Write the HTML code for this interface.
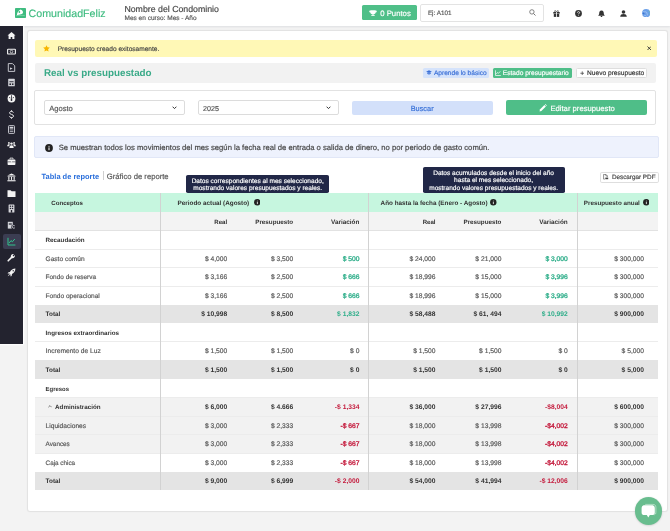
<!DOCTYPE html>
<html><head><meta charset="utf-8"><style>
html,body{margin:0;padding:0;}
body{width:670px;height:531px;position:relative;overflow:hidden;background:#f3f3f3;font-family:"Liberation Sans",sans-serif;text-rendering:geometricPrecision;}
.t{position:absolute;line-height:1;white-space:nowrap;}
.b{position:absolute;}
#w{position:absolute;left:0;top:0;width:670px;height:531px;will-change:transform;}
</style></head><body><div id="w">
<div class="b" style="left:0.00px;top:0.00px;width:670.00px;height:25.80px;background:#fff;box-shadow:0 0.5px 2px rgba(40,50,80,0.10);"></div>
<div class="b" style="left:14.90px;top:7.70px;width:10.70px;height:10.20px;background:#3fbc80;border-radius:0.8px;"></div>
<svg class="b" style="left:14.90px;top:7.70px;" width="10.9" height="10.2" viewBox="0 0 10.9 10.2"><path d="M5.5 1.4 C7.1 1.7 8.3 3.2 8.0 4.6 C7.8 5.6 7.0 6.1 6.0 6.3 C4.6 6.5 3.0 6.9 1.9 7.3 C1.9 5.0 2.8 3.0 5.5 1.4 Z" fill="#fff"/><ellipse cx="4.4" cy="4.0" rx="0.85" ry="1.05" fill="#3fbc80"/><path d="M1.2 7.7 C3.5 7.3 6.5 7.3 9.7 7.6" stroke="#fff" stroke-width="0.4" fill="none" opacity="0.7"/></svg>
<div class="t" style="left:28.60px;top:9.30px;font-size:10.66px;color:#3fbc80;-webkit-text-stroke-width:0.16px;letter-spacing:0px;">ComunidadFeliz</div>
<div class="t" style="left:124.40px;top:5.20px;font-size:8.78px;color:#444;-webkit-text-stroke-width:0.16px;">Nombre del Condominio</div>
<div class="t" style="left:124.50px;top:16.20px;font-size:6.52px;color:#555;-webkit-text-stroke-width:0.16px;">Mes en curso: Mes - Año</div>
<div class="b" style="left:362.00px;top:5.40px;width:54.50px;height:15.00px;background:#4fbf88;border-radius:1.5px;"></div>
<svg class="b" style="left:369.20px;top:9.90px;" width="8" height="6.5" viewBox="0 0 8 6.5"><path d="M1.3 0.3 H6.7 V2.2 C6.7 3.6 5.4 4.2 4.5 4.3 V5.3 H5.8 V6.3 H2.2 V5.3 H3.5 V4.3 C2.6 4.2 1.3 3.6 1.3 2.2 Z M0.2 0.8 H1.3 V2.6 C0.6 2.4 0.2 1.9 0.2 1.2 Z M7.8 0.8 H6.7 V2.6 C7.4 2.4 7.8 1.9 7.8 1.2 Z" fill="#fff"/></svg>
<div class="t" style="left:380.20px;top:9.90px;font-size:7.75px;color:#fff;-webkit-text-stroke-width:0.16px;">0 Puntos</div>
<div class="b" style="left:420.40px;top:4.20px;width:123.20px;height:17.80px;background:#fff;border:0.7px solid #e3e3e3;border-radius:2px;box-sizing:border-box;"></div>
<div class="t" style="left:427.90px;top:11.40px;font-size:6.34px;color:#555;-webkit-text-stroke-width:0.16px;">Ej: A101</div>
<svg class="b" style="left:528.80px;top:9.10px;" width="7" height="7" viewBox="0 0 7 7"><circle cx="2.9" cy="2.9" r="2.2" fill="none" stroke="#666" stroke-width="0.8"/><path d="M4.6 4.6 L6.5 6.5" stroke="#666" stroke-width="0.9"/></svg>
<svg class="b" style="left:553.00px;top:9.60px;" width="7" height="7" viewBox="0 0 7 7"><rect x="0.3" y="2" width="6.4" height="1.6" fill="#333"/><rect x="0.8" y="3.9" width="5.4" height="3" fill="#333"/><rect x="3.1" y="2" width="0.8" height="5" fill="#fff"/><path d="M3.5 2 C2.5 0 1 0.5 1.8 1.8 M3.5 2 C4.5 0 6 0.5 5.2 1.8" stroke="#333" stroke-width="0.7" fill="none"/></svg>
<svg class="b" style="left:575.30px;top:9.70px;" width="7" height="7" viewBox="0 0 7 7"><circle cx="3.5" cy="3.5" r="3.4" fill="#333"/><path d="M2.4 2.6 C2.4 1.3 4.6 1.3 4.6 2.5 C4.6 3.4 3.5 3.4 3.5 4.3" stroke="#fff" stroke-width="0.8" fill="none"/><circle cx="3.5" cy="5.4" r="0.45" fill="#fff"/></svg>
<svg class="b" style="left:597.60px;top:9.50px;" width="7" height="7.5" viewBox="0 0 7 7.5"><path d="M3.5 0.6 C1.6 0.6 1.2 2.2 1.2 3.6 C1.2 4.6 0.5 5.3 0.2 5.8 H6.8 C6.5 5.3 5.8 4.6 5.8 3.6 C5.8 2.2 5.4 0.6 3.5 0.6 Z" fill="#333"/><circle cx="3.5" cy="6.5" r="0.8" fill="#333"/></svg>
<svg class="b" style="left:619.90px;top:9.70px;" width="7" height="7" viewBox="0 0 7 7"><circle cx="3.5" cy="2" r="1.8" fill="#333"/><path d="M0.2 6.8 C0.4 4.6 1.6 4 3.5 4 C5.4 4 6.6 4.6 6.8 6.8 Z" fill="#333"/></svg>
<svg class="b" style="left:641.60px;top:8.80px;" width="8.4" height="8.4" viewBox="0 0 8.4 8.4"><circle cx="4.2" cy="4.2" r="4.1" fill="#6a9fe8"/><path d="M1.2 2.6 C2.4 3.4 3.6 2.2 4.6 3.2 C5.6 4.2 4.4 5.6 6.0 6.4 M2.2 6.6 C3.2 5.8 3.8 6.8 4.6 7.6" stroke="#b3cdf5" stroke-width="0.7" fill="none"/><path d="M6.8 1.8 L7.6 3 M7.2 4.4 L7.8 5.4" stroke="#7fcf9a" stroke-width="0.7"/><circle cx="1.6" cy="4.4" r="0.9" fill="#3f74cf"/></svg>
<div class="b" style="left:0.00px;top:25.60px;width:23.00px;height:318.00px;background:#23232f;box-shadow:0 0 1.5px 1px #fff;"></div>
<!--SIDEBAR-->
<div class="b" style="left:27.10px;top:30.40px;width:640.70px;height:481.50px;background:#fff;border:0.7px solid #e3e3e3;border-radius:3px;box-sizing:border-box;box-shadow:0 0 1.2px rgba(0,0,0,0.08);"></div>
<div class="b" style="left:35.30px;top:39.90px;width:621.90px;height:17.00px;background:#fff8b6;border-radius:2px;"></div>
<svg class="b" style="left:43.20px;top:45.20px;" width="7" height="7" viewBox="0 0 7 7"><path d="M3.5 0.2 L4.5 2.3 L6.8 2.6 L5.1 4.2 L5.6 6.5 L3.5 5.4 L1.4 6.5 L1.9 4.2 L0.2 2.6 L2.5 2.3 Z" fill="#f7b500"/></svg>
<div class="t" style="left:57.70px;top:46.70px;font-size:6.58px;color:#444;-webkit-text-stroke-width:0.16px;">Presupuesto creado exitosamente.</div>
<svg class="b" style="left:646.60px;top:45.90px;" width="4.5" height="4.5" viewBox="0 0 4.5 4.5"><path d="M0.5 0.5 L4 4 M4 0.5 L0.5 4" stroke="#333" stroke-width="0.9"/></svg>
<div class="b" style="left:34.60px;top:62.90px;width:621.40px;height:19.90px;background:#f2f2f2;border-radius:2px;"></div>
<div class="t" style="left:44.00px;top:69.20px;font-size:9.84px;color:#3aaa88;font-weight:700;">Real vs presupuestado</div>
<div class="b" style="left:422.60px;top:67.90px;width:66.90px;height:9.90px;background:#d5e3fb;border-radius:1.5px;"></div>
<svg class="b" style="left:425.80px;top:70.20px;" width="6" height="5" viewBox="0 0 6 5"><path d="M3 0.3 L5.9 1.7 L3 3.1 L0.1 1.7 Z" fill="#3a6fd6"/><path d="M1.3 2.5 V3.8 C2 4.6 4 4.6 4.7 3.8 V2.5 L3 3.4 Z" fill="#3a6fd6"/></svg>
<div class="t" style="left:433.90px;top:71.10px;font-size:6.60px;color:#3a6fd6;-webkit-text-stroke-width:0.16px;">Aprende lo básico</div>
<div class="b" style="left:493.10px;top:68.00px;width:78.60px;height:9.80px;background:#4fbe88;border-radius:1.5px;"></div>
<svg class="b" style="left:495.30px;top:69.90px;" width="6" height="6" viewBox="0 0 6 6"><path d="M0.5 0.3 V5.5 H5.8" stroke="#fff" stroke-width="0.7" fill="none"/><path d="M1.3 4 L2.5 2.5 L3.5 3.3 L5.3 1.3" stroke="#fff" stroke-width="0.7" fill="none"/></svg>
<div class="t" style="left:502.80px;top:71.10px;font-size:6.60px;color:#fff;-webkit-text-stroke-width:0.16px;">Estado presupuestario</div>
<div class="b" style="left:575.50px;top:68.20px;width:71.30px;height:9.80px;background:#fff;border:0.7px solid #dedede;border-radius:1.5px;box-sizing:border-box;"></div>
<svg class="b" style="left:579.50px;top:70.90px;" width="4.5" height="4.5" viewBox="0 0 4.5 4.5"><path d="M2.25 0.4 V4.1 M0.4 2.25 H4.1" stroke="#444" stroke-width="0.75"/></svg>
<div class="t" style="left:587.10px;top:71.10px;font-size:6.60px;color:#333;-webkit-text-stroke-width:0.16px;">Nuevo presupuesto</div>
<div class="b" style="left:34.20px;top:90.30px;width:621.60px;height:34.60px;background:#fff;border:0.7px solid #e2e2e2;border-radius:2px;box-sizing:border-box;"></div>
<div class="b" style="left:43.60px;top:100.40px;width:141.40px;height:14.80px;background:#fff;border:0.7px solid #dcdcdc;border-radius:2px;box-sizing:border-box;"></div>
<div class="t" style="left:49.20px;top:104.50px;font-size:7.60px;color:#555;-webkit-text-stroke-width:0.16px;">Agosto</div>
<svg class="b" style="left:171.90px;top:106.00px;" width="5" height="3.5" viewBox="0 0 5 3.5"><path d="M0.6 0.7 L2.5 2.6 L4.4 0.7" stroke="#333" stroke-width="1" fill="none"/></svg>
<div class="b" style="left:197.80px;top:100.40px;width:141.20px;height:14.80px;background:#fff;border:0.7px solid #dcdcdc;border-radius:2px;box-sizing:border-box;"></div>
<div class="t" style="left:203.00px;top:105.50px;font-size:7.15px;color:#555;-webkit-text-stroke-width:0.16px;">2025</div>
<svg class="b" style="left:325.90px;top:106.00px;" width="5" height="3.5" viewBox="0 0 5 3.5"><path d="M0.6 0.7 L2.5 2.6 L4.4 0.7" stroke="#333" stroke-width="1" fill="none"/></svg>
<div class="b" style="left:352.00px;top:100.50px;width:140.80px;height:14.40px;background:#d3e0fa;border-radius:2px;"></div>
<div class="t" style="left:410.70px;top:104.60px;font-size:7.36px;color:#3a72d8;-webkit-text-stroke-width:0.16px;">Buscar</div>
<div class="b" style="left:505.80px;top:100.30px;width:140.90px;height:14.30px;background:#4fbe88;border-radius:2px;"></div>
<svg class="b" style="left:538.60px;top:103.90px;" width="8" height="8" viewBox="0 0 8 8"><path d="M0.6 7.4 L0.9 5.6 L5.4 1.1 L6.9 2.6 L2.4 7.1 Z" fill="#fff"/><path d="M5.9 0.6 L6.4 0.1 L7.9 1.6 L7.4 2.1 Z" fill="#fff"/></svg>
<div class="t" style="left:550.40px;top:104.70px;font-size:7.68px;color:#fff;-webkit-text-stroke-width:0.16px;">Editar presupuesto</div>
<div class="b" style="left:34.00px;top:135.50px;width:625.00px;height:22.90px;background:#eef2fd;border:0.6px solid #e1e7f7;border-radius:2px;box-sizing:border-box;"></div>
<svg class="b" style="left:45.40px;top:143.70px;" width="8" height="8" viewBox="0 0 8 8"><circle cx="4" cy="4" r="3.9" fill="#222"/><rect x="3.5" y="3.4" width="1" height="2.8" fill="#fff"/><circle cx="4" cy="2.3" r="0.55" fill="#fff"/></svg>
<div class="t" style="left:58.70px;top:143.90px;font-size:7.66px;color:#444;-webkit-text-stroke-width:0.16px;">Se muestran todos los movimientos del mes según la fecha real de entrada o salida de dinero, no por periodo de gasto común.</div>
<div class="t" style="left:41.60px;top:172.50px;font-size:7.48px;color:#2a6fdb;font-weight:700;">Tabla de reporte</div>
<div class="b" style="left:103.20px;top:171.40px;width:0.60px;height:8.70px;background:#cfcfcf;"></div>
<div class="t" style="left:106.80px;top:172.50px;font-size:7.68px;color:#555;-webkit-text-stroke-width:0.16px;">Gráfico de reporte</div>
<div class="b" style="left:600.40px;top:172.30px;width:58.40px;height:10.30px;background:#fff;border:0.7px solid #dedede;border-radius:1.8px;box-sizing:border-box;"></div>
<svg class="b" style="left:603.20px;top:174.30px;" width="5.5" height="5.5" viewBox="0 0 5.5 5.5"><path d="M0.6 0.4 H2.9 L4.3 1.8 V3.2 M0.6 0.4 V5.1 H1.8" fill="none" stroke="#444" stroke-width="0.6"/><path d="M2.8 0.4 V1.9 H4.3" fill="none" stroke="#444" stroke-width="0.5"/><rect x="2.3" y="3.6" width="2.9" height="1.6" fill="#444"/></svg>
<div class="t" style="left:611.90px;top:174.60px;font-size:6.34px;color:#444;-webkit-text-stroke-width:0.16px;">Descargar PDF</div>
<div class="b" style="left:34.60px;top:193.30px;width:623.70px;height:18.56px;background:#c6f6df;"></div>
<div class="b" style="left:34.60px;top:211.86px;width:623.70px;height:18.56px;background:#f3f3f3;"></div>
<div class="b" style="left:34.60px;top:304.66px;width:623.70px;height:18.56px;background:#e4e4e4;"></div>
<div class="b" style="left:34.60px;top:360.34px;width:623.70px;height:18.56px;background:#e4e4e4;"></div>
<div class="b" style="left:34.60px;top:397.46px;width:623.70px;height:18.56px;background:#f2f2f2;"></div>
<div class="b" style="left:34.60px;top:416.02px;width:623.70px;height:18.56px;background:#f2f2f2;"></div>
<div class="b" style="left:34.60px;top:434.58px;width:623.70px;height:18.56px;background:#f2f2f2;"></div>
<div class="b" style="left:34.60px;top:471.70px;width:623.70px;height:18.56px;background:#e4e4e4;"></div>
<div class="b" style="left:34.60px;top:230.07px;width:623.70px;height:0.70px;background:#e2e2e2;"></div>
<div class="b" style="left:34.60px;top:248.63px;width:623.70px;height:0.70px;background:#ececec;"></div>
<div class="b" style="left:34.60px;top:267.19px;width:623.70px;height:0.70px;background:#ececec;"></div>
<div class="b" style="left:34.60px;top:285.75px;width:623.70px;height:0.70px;background:#ececec;"></div>
<div class="b" style="left:34.60px;top:341.43px;width:623.70px;height:0.70px;background:#ececec;"></div>
<div class="b" style="left:34.60px;top:397.11px;width:623.70px;height:0.70px;background:#ececec;"></div>
<div class="b" style="left:34.60px;top:415.67px;width:623.70px;height:0.70px;background:#ececec;"></div>
<div class="b" style="left:34.60px;top:434.23px;width:623.70px;height:0.70px;background:#ececec;"></div>
<div class="b" style="left:34.60px;top:452.79px;width:623.70px;height:0.70px;background:#ececec;"></div>
<div class="b" style="left:160.30px;top:193.30px;width:0.80px;height:296.96px;background:#d2d2d2;"></div>
<div class="b" style="left:368.40px;top:193.30px;width:0.80px;height:296.96px;background:#d2d2d2;"></div>
<div class="b" style="left:577.30px;top:193.30px;width:0.80px;height:296.96px;background:#d2d2d2;"></div>
<div class="t" style="left:51.30px;top:200.90px;font-size:6.13px;color:#333;font-weight:700;">Conceptos</div>
<div class="t" style="left:177.50px;top:200.90px;font-size:6.36px;color:#333;font-weight:700;">Periodo actual (Agosto)</div>
<div class="t" style="left:380.60px;top:200.90px;font-size:6.33px;color:#333;font-weight:700;">Año hasta la fecha (Enero - Agosto)</div>
<div class="t" style="left:583.80px;top:200.90px;font-size:6.28px;color:#333;font-weight:700;">Presupuesto anual</div>
<svg class="b" style="left:253.60px;top:199.30px;" width="6.6" height="6.6" viewBox="0 0 6.6 6.6"><circle cx="3.3" cy="3.3" r="3.2" fill="#222"/><rect x="2.9" y="2.8" width="0.8" height="2.3" fill="#fff"/><circle cx="3.3" cy="1.9" r="0.45" fill="#fff"/></svg>
<svg class="b" style="left:490.30px;top:199.30px;" width="6.6" height="6.6" viewBox="0 0 6.6 6.6"><circle cx="3.3" cy="3.3" r="3.2" fill="#222"/><rect x="2.9" y="2.8" width="0.8" height="2.3" fill="#fff"/><circle cx="3.3" cy="1.9" r="0.45" fill="#fff"/></svg>
<svg class="b" style="left:642.90px;top:199.30px;" width="6.6" height="6.6" viewBox="0 0 6.6 6.6"><circle cx="3.3" cy="3.3" r="3.2" fill="#222"/><rect x="2.9" y="2.8" width="0.8" height="2.3" fill="#fff"/><circle cx="3.3" cy="1.9" r="0.45" fill="#fff"/></svg>
<div class="t" style="right:442.80px;top:219.66px;font-size:6.10px;color:#333;font-weight:700;">Real</div>
<div class="t" style="right:376.80px;top:219.66px;font-size:6.27px;color:#333;font-weight:700;">Presupuesto</div>
<div class="t" style="right:310.60px;top:219.66px;font-size:6.40px;color:#333;font-weight:700;">Variación</div>
<div class="t" style="right:234.50px;top:219.66px;font-size:6.10px;color:#333;font-weight:700;">Real</div>
<div class="t" style="right:168.60px;top:219.66px;font-size:6.27px;color:#333;font-weight:700;">Presupuesto</div>
<div class="t" style="right:102.30px;top:219.66px;font-size:6.40px;color:#333;font-weight:700;">Variación</div>
<div class="t" style="left:45.60px;top:238.12px;font-size:6.28px;color:#333;font-weight:700;">Recaudación</div>
<div class="t" style="left:45.60px;top:256.68px;font-size:6.56px;color:#555;-webkit-text-stroke-width:0.16px;">Gasto común</div>
<div class="t" style="right:442.80px;top:256.68px;font-size:6.70px;color:#555;-webkit-text-stroke-width:0.16px;">$ 4,000</div>
<div class="t" style="right:376.80px;top:256.68px;font-size:6.70px;color:#555;-webkit-text-stroke-width:0.16px;">$ 3,500</div>
<div class="t" style="right:310.60px;top:256.68px;font-size:6.70px;color:#2fae8a;-webkit-text-stroke-width:0.16px;-webkit-text-stroke-width:0.32px;">$ 500</div>
<div class="t" style="right:234.50px;top:256.68px;font-size:6.70px;color:#555;-webkit-text-stroke-width:0.16px;">$ 24,000</div>
<div class="t" style="right:168.60px;top:256.68px;font-size:6.70px;color:#555;-webkit-text-stroke-width:0.16px;">$ 21,000</div>
<div class="t" style="right:102.30px;top:256.68px;font-size:6.70px;color:#2fae8a;-webkit-text-stroke-width:0.16px;-webkit-text-stroke-width:0.32px;">$ 3,000</div>
<div class="t" style="right:26.10px;top:256.68px;font-size:6.70px;color:#555;-webkit-text-stroke-width:0.16px;">$ 300,000</div>
<div class="t" style="left:45.60px;top:275.24px;font-size:6.44px;color:#555;-webkit-text-stroke-width:0.16px;">Fondo de reserva</div>
<div class="t" style="right:442.80px;top:275.24px;font-size:6.70px;color:#555;-webkit-text-stroke-width:0.16px;">$ 3,166</div>
<div class="t" style="right:376.80px;top:275.24px;font-size:6.70px;color:#555;-webkit-text-stroke-width:0.16px;">$ 2,500</div>
<div class="t" style="right:310.60px;top:275.24px;font-size:6.70px;color:#2fae8a;-webkit-text-stroke-width:0.16px;-webkit-text-stroke-width:0.32px;">$ 666</div>
<div class="t" style="right:234.50px;top:275.24px;font-size:6.70px;color:#555;-webkit-text-stroke-width:0.16px;">$ 18,996</div>
<div class="t" style="right:168.60px;top:275.24px;font-size:6.70px;color:#555;-webkit-text-stroke-width:0.16px;">$ 15,000</div>
<div class="t" style="right:102.30px;top:275.24px;font-size:6.70px;color:#2fae8a;-webkit-text-stroke-width:0.16px;-webkit-text-stroke-width:0.32px;">$ 3,996</div>
<div class="t" style="right:26.10px;top:275.24px;font-size:6.70px;color:#555;-webkit-text-stroke-width:0.16px;">$ 300,000</div>
<div class="t" style="left:45.60px;top:293.80px;font-size:6.56px;color:#555;-webkit-text-stroke-width:0.16px;">Fondo operacional</div>
<div class="t" style="right:442.80px;top:293.80px;font-size:6.70px;color:#555;-webkit-text-stroke-width:0.16px;">$ 3,166</div>
<div class="t" style="right:376.80px;top:293.80px;font-size:6.70px;color:#555;-webkit-text-stroke-width:0.16px;">$ 2,500</div>
<div class="t" style="right:310.60px;top:293.80px;font-size:6.70px;color:#2fae8a;-webkit-text-stroke-width:0.16px;-webkit-text-stroke-width:0.32px;">$ 666</div>
<div class="t" style="right:234.50px;top:293.80px;font-size:6.70px;color:#555;-webkit-text-stroke-width:0.16px;">$ 18,996</div>
<div class="t" style="right:168.60px;top:293.80px;font-size:6.70px;color:#555;-webkit-text-stroke-width:0.16px;">$ 15,000</div>
<div class="t" style="right:102.30px;top:293.80px;font-size:6.70px;color:#2fae8a;-webkit-text-stroke-width:0.16px;-webkit-text-stroke-width:0.32px;">$ 3,996</div>
<div class="t" style="right:26.10px;top:293.80px;font-size:6.70px;color:#555;-webkit-text-stroke-width:0.16px;">$ 300,000</div>
<div class="t" style="left:45.60px;top:312.36px;font-size:6.40px;color:#333;font-weight:700;">Total</div>
<div class="t" style="right:442.80px;top:312.36px;font-size:6.70px;color:#333;font-weight:700;">$ 10,998</div>
<div class="t" style="right:376.80px;top:312.36px;font-size:6.70px;color:#333;font-weight:700;">$ 8,500</div>
<div class="t" style="right:310.60px;top:312.36px;font-size:6.70px;color:#2fae8a;font-weight:700;">$ 1,832</div>
<div class="t" style="right:234.50px;top:312.36px;font-size:6.70px;color:#333;font-weight:700;">$ 58,488</div>
<div class="t" style="right:168.60px;top:312.36px;font-size:6.70px;color:#333;font-weight:700;">$ 61, 494</div>
<div class="t" style="right:102.30px;top:312.36px;font-size:6.70px;color:#2fae8a;font-weight:700;">$ 10,992</div>
<div class="t" style="right:26.10px;top:312.36px;font-size:6.70px;color:#333;font-weight:700;">$ 900,000</div>
<div class="t" style="left:45.60px;top:330.92px;font-size:6.28px;color:#333;font-weight:700;">Ingresos extraordinarios</div>
<div class="t" style="left:45.60px;top:349.48px;font-size:6.66px;color:#555;-webkit-text-stroke-width:0.16px;">Incremento de Luz</div>
<div class="t" style="right:442.80px;top:349.48px;font-size:6.70px;color:#555;-webkit-text-stroke-width:0.16px;">$ 1,500</div>
<div class="t" style="right:376.80px;top:349.48px;font-size:6.70px;color:#555;-webkit-text-stroke-width:0.16px;">$ 1,500</div>
<div class="t" style="right:310.60px;top:349.48px;font-size:6.70px;color:#555;-webkit-text-stroke-width:0.16px;">$ 0</div>
<div class="t" style="right:234.50px;top:349.48px;font-size:6.70px;color:#555;-webkit-text-stroke-width:0.16px;">$ 1,500</div>
<div class="t" style="right:168.60px;top:349.48px;font-size:6.70px;color:#555;-webkit-text-stroke-width:0.16px;">$ 1,500</div>
<div class="t" style="right:102.30px;top:349.48px;font-size:6.70px;color:#555;-webkit-text-stroke-width:0.16px;">$ 0</div>
<div class="t" style="right:26.10px;top:349.48px;font-size:6.70px;color:#555;-webkit-text-stroke-width:0.16px;">$ 5,000</div>
<div class="t" style="left:45.60px;top:368.04px;font-size:6.40px;color:#333;font-weight:700;">Total</div>
<div class="t" style="right:442.80px;top:368.04px;font-size:6.70px;color:#333;font-weight:700;">$ 1,500</div>
<div class="t" style="right:376.80px;top:368.04px;font-size:6.70px;color:#333;font-weight:700;">$ 1,500</div>
<div class="t" style="right:310.60px;top:368.04px;font-size:6.70px;color:#333;font-weight:700;">$ 0</div>
<div class="t" style="right:234.50px;top:368.04px;font-size:6.70px;color:#333;font-weight:700;">$ 1,500</div>
<div class="t" style="right:168.60px;top:368.04px;font-size:6.70px;color:#333;font-weight:700;">$ 1,500</div>
<div class="t" style="right:102.30px;top:368.04px;font-size:6.70px;color:#333;font-weight:700;">$ 0</div>
<div class="t" style="right:26.10px;top:368.04px;font-size:6.70px;color:#333;font-weight:700;">$ 5,000</div>
<div class="t" style="left:45.60px;top:387.60px;font-size:5.95px;color:#333;font-weight:700;">Egresos</div>
<svg class="b" style="left:47.60px;top:404.96px;" width="4" height="2.6" viewBox="0 0 4 2.6"><path d="M0.4 2.2 L2 0.6 L3.6 2.2" stroke="#333" stroke-width="0.6" fill="none"/></svg>
<div class="t" style="left:55.10px;top:405.16px;font-size:6.26px;color:#333;font-weight:700;">Administración</div>
<div class="t" style="right:442.80px;top:405.16px;font-size:6.70px;color:#333;font-weight:700;">$ 6,000</div>
<div class="t" style="right:376.80px;top:405.16px;font-size:6.70px;color:#333;font-weight:700;">$ 4.666</div>
<div class="t" style="right:310.60px;top:405.16px;font-size:6.70px;color:#c41a3c;font-weight:700;">-$ 1,334</div>
<div class="t" style="right:234.50px;top:405.16px;font-size:6.70px;color:#333;font-weight:700;">$ 36,000</div>
<div class="t" style="right:168.60px;top:405.16px;font-size:6.70px;color:#333;font-weight:700;">$ 27,996</div>
<div class="t" style="right:102.30px;top:405.16px;font-size:6.70px;color:#c41a3c;font-weight:700;">-$8,004</div>
<div class="t" style="right:26.10px;top:405.16px;font-size:6.70px;color:#333;font-weight:700;">$ 600,000</div>
<div class="t" style="left:45.60px;top:423.72px;font-size:6.64px;color:#555;-webkit-text-stroke-width:0.16px;">Liquidaciones</div>
<div class="t" style="right:442.80px;top:423.72px;font-size:6.70px;color:#555;-webkit-text-stroke-width:0.16px;">$ 3,000</div>
<div class="t" style="right:376.80px;top:423.72px;font-size:6.70px;color:#555;-webkit-text-stroke-width:0.16px;">$ 2,333</div>
<div class="t" style="right:310.60px;top:423.72px;font-size:6.70px;color:#c41a3c;-webkit-text-stroke-width:0.16px;-webkit-text-stroke-width:0.32px;">-$ 667</div>
<div class="t" style="right:234.50px;top:423.72px;font-size:6.70px;color:#555;-webkit-text-stroke-width:0.16px;">$ 18,000</div>
<div class="t" style="right:168.60px;top:423.72px;font-size:6.70px;color:#555;-webkit-text-stroke-width:0.16px;">$ 13,998</div>
<div class="t" style="right:102.30px;top:423.72px;font-size:6.70px;color:#c41a3c;-webkit-text-stroke-width:0.16px;-webkit-text-stroke-width:0.32px;">-$4,002</div>
<div class="t" style="right:26.10px;top:423.72px;font-size:6.70px;color:#555;-webkit-text-stroke-width:0.16px;">$ 300,000</div>
<div class="t" style="left:45.60px;top:442.28px;font-size:6.34px;color:#555;-webkit-text-stroke-width:0.16px;">Avances</div>
<div class="t" style="right:442.80px;top:442.28px;font-size:6.70px;color:#555;-webkit-text-stroke-width:0.16px;">$ 3,000</div>
<div class="t" style="right:376.80px;top:442.28px;font-size:6.70px;color:#555;-webkit-text-stroke-width:0.16px;">$ 2,333</div>
<div class="t" style="right:310.60px;top:442.28px;font-size:6.70px;color:#c41a3c;-webkit-text-stroke-width:0.16px;-webkit-text-stroke-width:0.32px;">-$ 667</div>
<div class="t" style="right:234.50px;top:442.28px;font-size:6.70px;color:#555;-webkit-text-stroke-width:0.16px;">$ 18,000</div>
<div class="t" style="right:168.60px;top:442.28px;font-size:6.70px;color:#555;-webkit-text-stroke-width:0.16px;">$ 13,998</div>
<div class="t" style="right:102.30px;top:442.28px;font-size:6.70px;color:#c41a3c;-webkit-text-stroke-width:0.16px;-webkit-text-stroke-width:0.32px;">-$4,002</div>
<div class="t" style="right:26.10px;top:442.28px;font-size:6.70px;color:#555;-webkit-text-stroke-width:0.16px;">$ 300,000</div>
<div class="t" style="left:45.60px;top:460.84px;font-size:6.34px;color:#555;-webkit-text-stroke-width:0.16px;">Caja chica</div>
<div class="t" style="right:442.80px;top:460.84px;font-size:6.70px;color:#555;-webkit-text-stroke-width:0.16px;">$ 3,000</div>
<div class="t" style="right:376.80px;top:460.84px;font-size:6.70px;color:#555;-webkit-text-stroke-width:0.16px;">$ 2,333</div>
<div class="t" style="right:310.60px;top:460.84px;font-size:6.70px;color:#c41a3c;-webkit-text-stroke-width:0.16px;-webkit-text-stroke-width:0.32px;">-$ 667</div>
<div class="t" style="right:234.50px;top:460.84px;font-size:6.70px;color:#555;-webkit-text-stroke-width:0.16px;">$ 18,000</div>
<div class="t" style="right:168.60px;top:460.84px;font-size:6.70px;color:#555;-webkit-text-stroke-width:0.16px;">$ 13,998</div>
<div class="t" style="right:102.30px;top:460.84px;font-size:6.70px;color:#c41a3c;-webkit-text-stroke-width:0.16px;-webkit-text-stroke-width:0.32px;">-$4,002</div>
<div class="t" style="right:26.10px;top:460.84px;font-size:6.70px;color:#555;-webkit-text-stroke-width:0.16px;">$ 300,000</div>
<div class="t" style="left:45.60px;top:479.40px;font-size:6.40px;color:#333;font-weight:700;">Total</div>
<div class="t" style="right:442.80px;top:479.40px;font-size:6.70px;color:#333;font-weight:700;">$ 9,000</div>
<div class="t" style="right:376.80px;top:479.40px;font-size:6.70px;color:#333;font-weight:700;">$ 6,999</div>
<div class="t" style="right:310.60px;top:479.40px;font-size:6.70px;color:#c41a3c;font-weight:700;">-$ 2,000</div>
<div class="t" style="right:234.50px;top:479.40px;font-size:6.70px;color:#333;font-weight:700;">$ 54,000</div>
<div class="t" style="right:168.60px;top:479.40px;font-size:6.70px;color:#333;font-weight:700;">$ 41,994</div>
<div class="t" style="right:102.30px;top:479.40px;font-size:6.70px;color:#c41a3c;font-weight:700;">-$ 12,006</div>
<div class="t" style="right:26.10px;top:479.40px;font-size:6.70px;color:#333;font-weight:700;">$ 900,000</div>
<div class="b" style="left:186.40px;top:175.10px;width:142.60px;height:17.60px;background:#212747;border-radius:1.8px;"></div>
<div class="t" style="left:57.70px;width:400px;text-align:center;top:178.60px;font-size:6.56px;color:#fff;-webkit-text-stroke-width:0.16px;">Datos correspondientes al mes seleccionado,</div>
<div class="t" style="left:57.70px;width:400px;text-align:center;top:185.70px;font-size:6.56px;color:#fff;-webkit-text-stroke-width:0.16px;">mostrando valores presupuestados y reales.</div>
<div class="b" style="left:422.50px;top:167.30px;width:142.20px;height:25.40px;background:#212747;border-radius:1.8px;"></div>
<div class="t" style="left:293.60px;width:400px;text-align:center;top:171.10px;font-size:6.56px;color:#fff;-webkit-text-stroke-width:0.16px;">Datos acumulados desde el inicio del año</div>
<div class="t" style="left:293.60px;width:400px;text-align:center;top:178.40px;font-size:6.56px;color:#fff;-webkit-text-stroke-width:0.16px;">hasta el mes seleccionado,</div>
<div class="t" style="left:293.60px;width:400px;text-align:center;top:185.70px;font-size:6.56px;color:#fff;-webkit-text-stroke-width:0.16px;">mostrando valores presupuestados y reales.</div>
<div class="b" style="left:2.6px;top:234.3px;width:18px;height:14.7px;background:#3b3d52;border-radius:2px;"></div>
<svg class="b" style="left:7.10px;top:30.90px;" width="9" height="9" viewBox="0 0 9 9"><path d="M4.5 0.9 L8.5 4.6 H7.4 V8.1 H5.3 V6 H3.7 V8.1 H1.6 V4.6 H0.5 Z" fill="#f4f4f4"/></svg>
<svg class="b" style="left:7.10px;top:46.50px;" width="9" height="9" viewBox="0 0 9 9"><rect x="0.6" y="2.2" width="7.8" height="4.8" rx="0.6" fill="none" stroke="#f4f4f4" stroke-width="1.1"/><circle cx="4.5" cy="4.6" r="1.3" fill="none" stroke="#f4f4f4" stroke-width="0.7"/></svg>
<svg class="b" style="left:7.10px;top:62.70px;" width="9" height="9" viewBox="0 0 9 9"><path d="M1.3 0.6 H5.5 L7.7 2.8 V8.4 H1.3 Z" fill="none" stroke="#d3d4da" stroke-width="0.9"/><path d="M3 4.5 L5.7 5.6 L3 6.8 Z" fill="#d3d4da"/></svg>
<svg class="b" style="left:7.10px;top:78.40px;" width="9" height="9" viewBox="0 0 9 9"><rect x="1.2" y="0.7" width="6.6" height="7.6" rx="0.6" fill="#d3d4da"/><rect x="2.4" y="3.3" width="4.2" height="0.9" fill="#23232f"/><rect x="2.4" y="5.4" width="1.6" height="1.6" fill="#23232f"/><rect x="4.9" y="5.4" width="1.6" height="1.6" fill="#23232f"/></svg>
<svg class="b" style="left:7.10px;top:93.70px;" width="9" height="9" viewBox="0 0 9 9"><circle cx="4.5" cy="4.5" r="3.9" fill="#f4f4f4"/><path d="M4.5 1.2 V6 M2 3.4 L3.4 4 M7 3.4 L5.6 4" stroke="#23232f" stroke-width="0.8"/><circle cx="4.5" cy="6" r="0.9" fill="#23232f"/></svg>
<svg class="b" style="left:7.10px;top:110.00px;" width="9" height="9" viewBox="0 0 9 9"><path d="M6.3 2.6 C6 1.6 5.3 1.4 4.5 1.4 C3.3 1.4 2.6 2 2.6 2.9 C2.6 4.8 6.5 4 6.5 6.1 C6.5 7.1 5.6 7.6 4.5 7.6 C3.4 7.6 2.7 7.1 2.5 6.3 M4.5 0.3 V1.4 M4.5 7.6 V8.7" fill="none" stroke="#f4f4f4" stroke-width="1"/></svg>
<svg class="b" style="left:7.10px;top:125.30px;" width="9" height="9" viewBox="0 0 9 9"><rect x="1.5" y="0.6" width="6" height="7.8" rx="0.7" fill="none" stroke="#d3d4da" stroke-width="0.9"/><rect x="2.7" y="1.8" width="3.6" height="1.8" fill="#d3d4da"/><rect x="2.7" y="4.6" width="3.6" height="0.7" fill="#d3d4da"/><rect x="2.7" y="6.2" width="3.6" height="0.7" fill="#d3d4da"/></svg>
<svg class="b" style="left:7.10px;top:141.20px;" width="9" height="9" viewBox="0 0 9 9"><circle cx="4.5" cy="2.6" r="1.2" fill="#f4f4f4"/><circle cx="1.9" cy="1.9" r="0.9" fill="#f4f4f4"/><circle cx="7.1" cy="1.9" r="0.9" fill="#f4f4f4"/><path d="M2.3 6.9 C2.4 4.8 3.3 4.2 4.5 4.2 C5.7 4.2 6.6 4.8 6.7 6.9 Z" fill="#f4f4f4"/><path d="M0.2 5.3 C0.3 3.8 0.9 3.3 1.9 3.3 C2.5 3.3 2.9 3.5 3.1 3.8 C2.5 4.2 2.1 4.7 2 5.3 Z M8.8 5.3 C8.7 3.8 8.1 3.3 7.1 3.3 C6.5 3.3 6.1 3.5 5.9 3.8 C6.5 4.2 6.9 4.7 7 5.3 Z" fill="#f4f4f4"/></svg>
<svg class="b" style="left:7.10px;top:157.00px;" width="9" height="9" viewBox="0 0 9 9"><rect x="0.6" y="2.4" width="7.8" height="5.6" rx="0.7" fill="#f4f4f4"/><path d="M3 2.4 V1.1 H6 V2.4" fill="none" stroke="#f4f4f4" stroke-width="0.8"/><rect x="0.6" y="4.6" width="7.8" height="0.6" fill="#23232f"/><rect x="3.9" y="4.2" width="1.2" height="1.3" fill="#f4f4f4"/></svg>
<svg class="b" style="left:7.10px;top:173.30px;" width="9" height="9" viewBox="0 0 9 9"><path d="M4.5 0.5 L8.6 2.6 H0.4 Z" fill="#f4f4f4"/><rect x="0.6" y="2.9" width="7.8" height="0.7" fill="#f4f4f4"/><rect x="1.3" y="3.9" width="1.1" height="3" fill="#f4f4f4"/><rect x="3.95" y="3.9" width="1.1" height="3" fill="#f4f4f4"/><rect x="6.6" y="3.9" width="1.1" height="3" fill="#f4f4f4"/><rect x="0.4" y="7.2" width="8.2" height="1.1" fill="#f4f4f4"/></svg>
<svg class="b" style="left:7.10px;top:189.00px;" width="9" height="9" viewBox="0 0 9 9"><path d="M0.5 1.2 H3.6 L4.6 2.3 H8.5 V8 H0.5 Z" fill="#f4f4f4"/></svg>
<svg class="b" style="left:7.10px;top:204.40px;" width="9" height="9" viewBox="0 0 9 9"><rect x="1.6" y="0.4" width="5.8" height="8.2" rx="0.6" fill="#d9d9de"/><rect x="2.8" y="1.6" width="1.3" height="1.3" fill="#23232f"/><rect x="4.9" y="1.6" width="1.3" height="1.3" fill="#23232f"/><rect x="2.8" y="3.8" width="1.3" height="1.3" fill="#23232f"/><rect x="4.9" y="3.8" width="1.3" height="1.3" fill="#23232f"/><rect x="3.8" y="6" width="1.4" height="2.6" fill="#23232f"/></svg>
<svg class="b" style="left:7.10px;top:220.70px;" width="9" height="9" viewBox="0 0 9 9"><rect x="0.8" y="0.8" width="5" height="6.8" fill="#d3d4da"/><rect x="1.8" y="2" width="3" height="0.6" fill="#23232f"/><rect x="1.8" y="3.3" width="3" height="0.6" fill="#23232f"/><circle cx="6.4" cy="6" r="2.3" fill="#23232f"/><path d="M7.8 5 C7.2 4.1 5.4 4.2 5.2 5.6 C5.1 6.9 6.6 7.6 7.8 6.9" fill="none" stroke="#d3d4da" stroke-width="0.9"/></svg>
<svg class="b" style="left:7.10px;top:237.30px;" width="9" height="9" viewBox="0 0 9 9"><path d="M1 0.8 V8 H8.4" fill="none" stroke="#33c48e" stroke-width="1"/><path d="M2.2 6 L4 3.6 L5.4 4.8 L7.8 2" fill="none" stroke="#33c48e" stroke-width="1"/></svg>
<svg class="b" style="left:7.10px;top:252.70px;" width="9" height="9" viewBox="0 0 9 9"><path d="M1.2 7.8 L4.6 4.4" stroke="#f4f4f4" stroke-width="1.6" stroke-linecap="round"/><path d="M4 4.6 C3.2 2.6 4.8 0.6 7 1.1 L5.6 2.5 L6.5 3.4 L7.9 2 C8.4 4.2 6.4 5.8 4.4 5" fill="#f4f4f4"/></svg>
<svg class="b" style="left:7.10px;top:267.80px;" width="9" height="9" viewBox="0 0 9 9"><path d="M8.4 0.6 C6 0.6 4 1.8 2.9 4 L1.1 4.4 L0.6 5.4 L2.4 5.6 L3.4 6.6 L3.6 8.4 L4.6 7.9 L5 6.1 C7.2 5 8.4 3 8.4 0.6 Z" fill="#f4f4f4"/><circle cx="6.2" cy="2.8" r="0.7" fill="#23232f"/><path d="M2.2 6 L0.8 8.2 L3 6.8 Z" fill="#f4f4f4"/></svg>
<div class="b" style="left:634.6px;top:497.1px;width:27.8px;height:27.8px;border-radius:50%;background:#68bd8e;box-shadow:0 0.5px 2px rgba(0,0,0,0.18);"></div>
<svg class="b" style="left:640.80px;top:502.60px;" width="16" height="16" viewBox="0 0 16 16"><path d="M4.2 1.4 H11.8 C13.9 1.4 14.9 2.4 14.9 4.4 V9.2 C14.9 10.8 14.2 11.6 13.2 11.8" fill="none" stroke="#fff" stroke-width="0.55" opacity="0.85"/><path d="M3.6 2.3 H10.8 C12.8 2.3 13.8 3.3 13.8 5.2 V9.4 C13.8 11.2 12.8 12.0 10.8 12.0 H8.8 L7.3 14.4 L5.8 12.0 H3.6 C1.6 12.0 0.6 11.2 0.6 9.4 V5.2 C0.6 3.3 1.6 2.3 3.6 2.3 Z" fill="#fff"/></svg>
</div></body></html>
